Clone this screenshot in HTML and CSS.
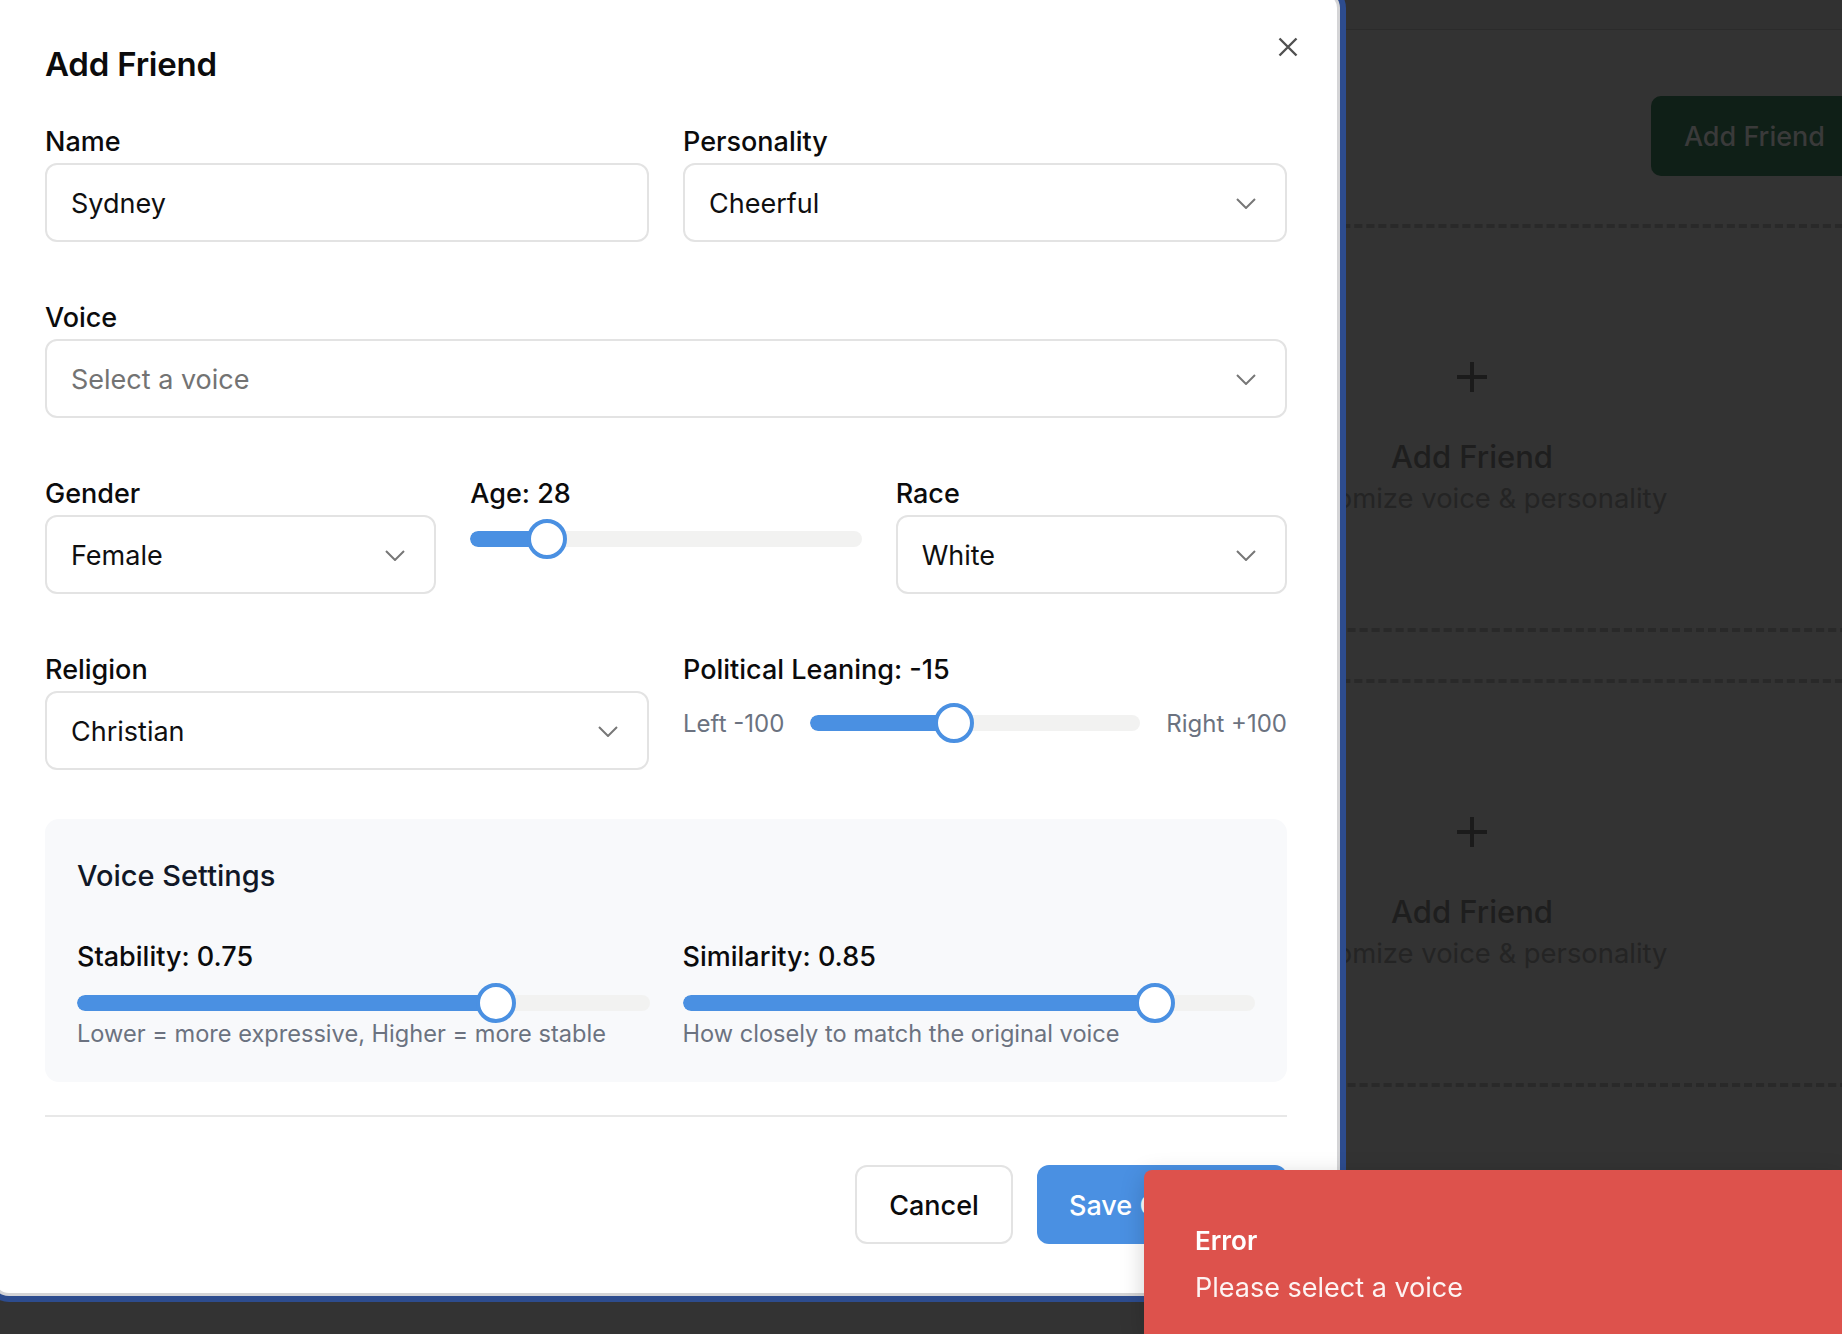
FILE: index.html
```html
<!DOCTYPE html>
<html lang="en">
<head>
<meta charset="utf-8">
<title>Add Friend</title>
<link rel="stylesheet" href="styles.css">
</head>
<body>
<div class="app">
  <header class="app-header"></header>
  <main class="app-main">
    <div class="toolbar">
      <button class="page-add-btn" type="button">Add Friend</button>
    </div>
    <div class="card-list">
      <div class="add-card">
        <svg class="add-card-plus" width="30" height="30" viewBox="0 0 30 30"><path d="M15 0v30M0 15h30"/></svg>
        <div class="add-card-title">Add Friend</div>
        <div class="add-card-sub">Customize voice &amp; personality</div>
      </div>
      <div class="add-card">
        <svg class="add-card-plus" width="30" height="30" viewBox="0 0 30 30"><path d="M15 0v30M0 15h30"/></svg>
        <div class="add-card-title">Add Friend</div>
        <div class="add-card-sub">Customize voice &amp; personality</div>
      </div>
    </div>
  </main>
</div>

<div class="modal" role="dialog">
  <button class="modal-close" type="button" aria-label="Close">
    <svg width="20" height="20" viewBox="0 0 20 20"><path d="M1.5 1.5l17 17M18.5 1.5l-17 17"/></svg>
  </button>
  <h2 class="modal-title">Add Friend</h2>

  <div class="form">
    <div class="row cols-2">
      <div class="field">
        <div class="label">Name</div>
        <div class="control">Sydney</div>
      </div>
      <div class="field">
        <div class="label">Personality</div>
        <div class="control select"><span>Cheerful</span><svg class="chev" width="20" height="11" viewBox="0 0 20 11"><path d="M1 1l9 9 9-9"/></svg></div>
      </div>
    </div>

    <div class="row cols-1">
      <div class="field">
        <div class="label">Voice</div>
        <div class="control select placeholder"><span>Select a voice</span><svg class="chev" width="20" height="11" viewBox="0 0 20 11"><path d="M1 1l9 9 9-9"/></svg></div>
      </div>
    </div>

    <div class="row cols-3">
      <div class="field">
        <div class="label">Gender</div>
        <div class="control select"><span>Female</span><svg class="chev" width="20" height="11" viewBox="0 0 20 11"><path d="M1 1l9 9 9-9"/></svg></div>
      </div>
      <div class="field">
        <div class="label">Age: 28</div>
        <div class="slider" style="--p:0.1613">
          <div class="slider-track"><div class="slider-fill"></div></div>
          <div class="slider-thumb"></div>
        </div>
      </div>
      <div class="field">
        <div class="label">Race</div>
        <div class="control select"><span>White</span><svg class="chev" width="20" height="11" viewBox="0 0 20 11"><path d="M1 1l9 9 9-9"/></svg></div>
      </div>
    </div>

    <div class="row cols-2">
      <div class="field">
        <div class="label">Religion</div>
        <div class="control select"><span>Christian</span><svg class="chev" width="20" height="11" viewBox="0 0 20 11"><path d="M1 1l9 9 9-9"/></svg></div>
      </div>
      <div class="field">
        <div class="label">Political Leaning: -15</div>
        <div class="range-row">
          <span class="range-end">Left -100</span>
          <div class="slider slider-inline" style="--p:0.425">
            <div class="slider-track"><div class="slider-fill"></div></div>
            <div class="slider-thumb"></div>
          </div>
          <span class="range-end">Right +100</span>
        </div>
      </div>
    </div>

    <section class="voice-settings">
      <h3 class="vs-title">Voice Settings</h3>
      <div class="vs-grid">
        <div class="field">
          <div class="label">Stability: 0.75</div>
          <div class="slider slider-vs" style="--p:0.75">
            <div class="slider-track"><div class="slider-fill"></div></div>
            <div class="slider-thumb"></div>
          </div>
          <div class="hint">Lower = more expressive, Higher = more stable</div>
        </div>
        <div class="field">
          <div class="label">Similarity: 0.85</div>
          <div class="slider slider-vs" style="--p:0.85">
            <div class="slider-track"><div class="slider-fill"></div></div>
            <div class="slider-thumb"></div>
          </div>
          <div class="hint">How closely to match the original voice</div>
        </div>
      </div>
    </section>

    <hr class="divider">

    <div class="modal-footer">
      <button class="btn btn-cancel" type="button">Cancel</button>
      <button class="btn btn-save" type="button">Save Changes</button>
    </div>
  </div>
</div>

<div class="toast" role="alert">
  <div class="toast-title">Error</div>
  <div class="toast-msg">Please select a voice</div>
</div>
</body>
</html>
```

FILE: styles.css
```css
* { box-sizing: border-box; }

html, body {
  margin: 0;
  padding: 0;
}

body {
  width: 1842px;
  height: 1334px;
  overflow: hidden;
  position: relative;
  background: #333333;
  font-family: Inter, "Noto Sans", "Liberation Sans", sans-serif;
  color: #0f0f10;
}

/* ---------- dimmed page behind the dialog ---------- */
.app-header {
  height: 30px;
  background: #313131;
  border-bottom: 1px solid #2b2b2b;
}

.app-main {
  width: 772px;
  margin-left: 1086px;
  display: flex;
  flex-direction: column;
}

.toolbar {
  display: flex;
  justify-content: flex-end;
  padding-top: 66px;
}

.page-add-btn {
  height: 80px;
  padding: 0 33px;
  border: 0;
  border-radius: 10px;
  background: #0f1f17;
  color: #3a3a3a;
  font-family: inherit;
  font-size: 27px;
  font-weight: 500;
}

.card-list {
  display: flex;
  flex-direction: column;
  gap: 47px;
  margin-top: 48px;
}

.add-card {
  height: 408px;
  border: 4px dashed #292929;
  border-radius: 16px;
  display: flex;
  flex-direction: column;
  align-items: center;
  padding-top: 134px;
}

.add-card-plus {
  display: block;
  stroke: #1b1b1b;
  stroke-width: 4;
  fill: none;
}

.add-card-title {
  margin-top: 46px;
  font-size: 31px;
  line-height: 37px;
  font-weight: 500;
  color: #1e1e1e;
}

.add-card-sub {
  margin-top: 7px;
  font-size: 27.4px;
  line-height: 32px;
  color: #242424;
  white-space: nowrap;
}

/* ---------- dialog ---------- */
.modal {
  position: absolute;
  left: -5px;
  top: -6px;
  width: 1342px;
  background: #ffffff;
  border-radius: 14px;
  padding: 50px 50px 49px 50px;
  box-shadow: 0 0 0 3px #d4d4d6, 0 0 0 9px #2d4c8e;
  z-index: 5;
}

.modal-close {
  position: absolute;
  top: 43px;
  right: 39px;
  width: 20px;
  height: 20px;
  padding: 0;
  border: 0;
  background: none;
}

.modal-close svg {
  display: block;
  stroke: #505050;
  stroke-width: 2.4;
  fill: none;
}

.modal-title {
  margin: 0 0 40px 0;
  font-size: 33px;
  line-height: 40px;
  font-weight: 600;
  color: #0b0b0c;
  letter-spacing: -0.2px;
}

.form {
  display: flex;
  flex-direction: column;
}

.row {
  display: grid;
  column-gap: 34px;
}

.row + .row { margin-top: 58px; }

.cols-1 { grid-template-columns: 1fr; }
.cols-2 { grid-template-columns: 1fr 1fr; }
.cols-3 { grid-template-columns: 1fr 1fr 1fr; }

.field {
  display: flex;
  flex-direction: column;
  min-width: 0;
}

.label {
  font-size: 27px;
  line-height: 36px;
  font-weight: 500;
  color: #0b0b0c;
  margin-bottom: 3px;
}

.control {
  height: 79px;
  border: 2px solid #e3e3e3;
  border-radius: 12px;
  padding: 1px 29px 0 24px;
  display: flex;
  align-items: center;
  font-size: 27px;
  color: #0f0f10;
  background: #ffffff;
}

.select { justify-content: space-between; }

.placeholder { color: #737373; }

.chev {
  display: block;
  flex: none;
  stroke: #777777;
  stroke-width: 2;
  fill: none;
}

/* ---------- sliders ---------- */
.slider {
  position: relative;
  height: 28px;
  margin-top: 10px;
  display: flex;
  align-items: center;
}

.slider-track {
  width: 100%;
  height: 16px;
  border-radius: 8px;
  background: #f2f2f1;
  overflow: hidden;
}

.slider-fill {
  height: 100%;
  border-radius: 8px;
  background: #4a90e2;
  width: calc(20px + (100% - 40px) * var(--p));
}

.slider-thumb {
  position: absolute;
  top: 50%;
  left: calc(20px + (100% - 40px) * var(--p));
  width: 40px;
  height: 40px;
  margin: -20px 0 0 -20px;
  border-radius: 50%;
  background: #ffffff;
  border: 4px solid #4a90e2;
}

.range-row {
  display: flex;
  align-items: center;
  gap: 26px;
  height: 42px;
  margin-top: 11px;
}

.slider-inline {
  flex: 1;
  margin-top: 0;
}

.range-end {
  font-size: 24px;
  color: #6b7280;
  white-space: nowrap;
}

/* ---------- voice settings ---------- */
.voice-settings {
  margin-top: 49px;
  background: #f8f9fb;
  border-radius: 14px;
  padding: 32px;
}

.vs-title {
  margin: 0 0 38px 0;
  font-size: 29px;
  line-height: 50px;
  font-weight: 500;
  color: #111827;
}

.vs-grid {
  display: grid;
  grid-template-columns: 1fr 1fr;
  column-gap: 33px;
}

.slider-vs { margin-top: 11px; }

.hint {
  margin-top: 1px;
  font-size: 23.6px;
  line-height: 32px;
  color: #6b7280;
}

/* ---------- footer ---------- */
.divider {
  margin: 33px 0 0 0;
  height: 2px;
  border: 0;
  background: #e8e8e8;
}

.modal-footer {
  display: flex;
  justify-content: flex-end;
  gap: 24px;
  margin-top: 48px;
}

.btn {
  height: 79px;
  border-radius: 12px;
  font-family: inherit;
  font-size: 27px;
  font-weight: 500;
  padding: 2px 30px 0 30px;
}

.btn-cancel {
  width: 158px;
  border: 2px solid #e3e3e3;
  background: #ffffff;
  color: #0b0b0c;
}

.btn-save {
  width: 250px;
  border: 0;
  background: #4a90e2;
  color: #ffffff;
  text-align: left;
  padding-left: 32px;
}

/* ---------- toast ---------- */
.toast {
  position: fixed;
  left: 1144px;
  top: 1170px;
  right: 0;
  bottom: 0;
  z-index: 10;
  background: #dd524c;
  border-radius: 8px 0 0 0;
  padding: 54px 51px;
  color: #ffffff;
  box-shadow: 0 6px 24px rgba(0, 0, 0, 0.18);
}

.toast-title {
  font-size: 26px;
  line-height: 34px;
  font-weight: 600;
}

.toast-msg {
  margin-top: 13px;
  font-size: 27px;
  line-height: 34px;
  color: rgba(255, 255, 255, 0.93);
}
```
